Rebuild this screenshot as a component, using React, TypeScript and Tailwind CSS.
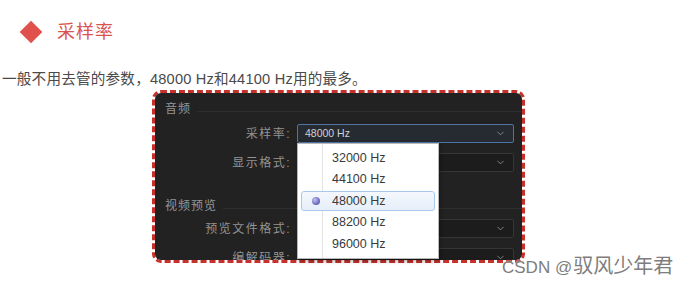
import React from "react";
import { ChevronDown } from "lucide-react";

const font = "font-['Liberation_Sans','Noto_Sans_CJK_SC',sans-serif]";

const rates = ["32000 Hz", "44100 Hz", "48000 Hz", "88200 Hz", "96000 Hz"];

const Field = ({
  label,
  value,
  active,
}: {
  label: string;
  value?: string;
  active?: boolean;
}) => (
  <div className="flex items-center h-[19px]">
    <div className="w-[138px] pr-[2px] text-right text-[12px] tracking-[1.5px] text-[#939393] leading-none">
      {label}
    </div>
    <div
      className={`ml-[4px] w-[217px] h-full flex items-center justify-between px-[7px] rounded-[2px] border ${
        active ? "border-[#4f73a3] bg-[#262a31]" : "border-[#363636] bg-[#1c1c1c]"
      }`}
    >
      <span className="text-[10.5px] text-[#d2d2d2] leading-none">{value}</span>
      <ChevronDown size={11} strokeWidth={2} className="text-[#8a8a8a]" />
    </div>
  </div>
);

const Section = ({ title }: { title: string }) => (
  <div className="flex items-center h-[16px] pl-[10px]">
    <span className="text-[12px] tracking-[1px] text-[#959595] leading-none">{title}</span>
    <div className="flex-1 h-px bg-[#2e2e2e] ml-[6px] mt-[4px]" />
  </div>
);

const App = () => {
  return (
    <div className={`relative w-[689px] h-[286px] bg-white overflow-hidden ${font}`}>
      <div className="flex items-center h-[24px] mt-[20px]">
        <div className="ml-[23px] w-[16px] h-[16px] rotate-45 bg-[#e0504d]" />
        <span className="ml-[18px] text-[18px] text-[#d9534f] leading-none tracking-[1px]">采样率</span>
      </div>

      <p className="mt-[25px] pl-[2px] h-[20px] text-[14.6px] tracking-[0.2px] leading-[20px] text-[#4a4a4a] whitespace-nowrap">
        一般不用去管的参数，48000 Hz和44100 Hz用的最多。
      </p>

      <div className="ml-[152px] mt-[1px] w-[373px] h-[173px] relative rounded-[9px] border-[3px] border-dashed border-[#c8302c] bg-white">
        <div className="w-full h-full rounded-[6px] bg-[#222222] overflow-hidden flex flex-col pt-[10px]">
          <Section title="音频" />
          <div className="mt-[9px]">
            <Field label="采样率:" value="48000 Hz" active />
          </div>
          <div className="mt-[10px]">
            <Field label="显示格式:" />
          </div>
          <div className="mt-[16px] h-px bg-[#303030]" />
          <div className="mt-[10px]">
            <Section title="视频预览" />
          </div>
          <div className="mt-[5px]">
            <Field label="预览文件格式:" />
          </div>
          <div className="mt-[10px]">
            <Field label="编解码器:" />
          </div>
        </div>

        <div className="absolute left-[142px] top-[50px] w-[142px] h-[116px] bg-white border border-[#b9b9b9] shadow-[1px_2px_4px_rgba(0,0,0,0.35)] py-[3px]">
          <div className="absolute left-[24px] top-0 bottom-0 w-px bg-[#e3e3e3]" />
          {rates.map((r) => {
            const sel = r === "48000 Hz";
            return (
              <div key={r} className="relative h-[21.5px] px-[3px] py-[1px]">
                <div
                  className={`h-full flex items-center rounded-[3px] border ${
                    sel
                      ? "border-[#a9c9ec] bg-[linear-gradient(#f4f8fd,#e6eefa)]"
                      : "border-transparent"
                  }`}
                >
                  <div className="w-[30px] flex justify-center pr-[2px]">
                    {sel && (
                      <div className="w-[8px] h-[8px] rounded-full bg-[radial-gradient(circle_at_35%_35%,#c0c0f5,#3b3b98)]" />
                    )}
                  </div>
                  <span className="text-[12.5px] text-[#3a3a3a] leading-none">{r}</span>
                </div>
              </div>
            );
          })}
        </div>
      </div>

      <div className="absolute left-[502px] top-[256px] flex items-baseline text-[#7d7d7d] leading-none [text-shadow:0_0_2px_#fff]">
        <span className="text-[17px]">CSDN @</span>
        <span className="text-[20px] ml-[1px]">驭风少年君</span>
      </div>
    </div>
  );
};

export default App;
